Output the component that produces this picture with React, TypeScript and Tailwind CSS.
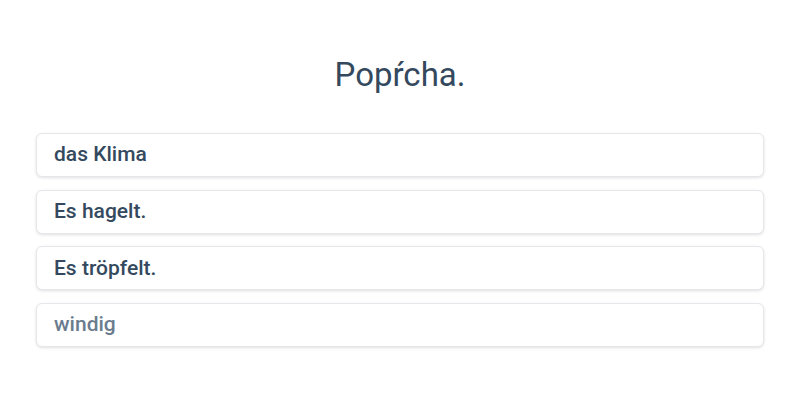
const options = [
  { label: "das Klima", muted: false },
  { label: "Es hagelt.", muted: false },
  { label: "Es tröpfelt.", muted: false },
  { label: "windig", muted: true },
];

export default function App() {
  return (
    <div className="w-[800px] h-[400px] bg-white font-['Roboto',sans-serif] text-[#34495e]">
      <div className="flex flex-col px-[36px] pt-[55px]">
        <h1 className="text-center text-[33px] leading-[40px] font-normal">Popŕcha.</h1>
        <div className="mt-[38px] flex flex-col gap-[12.67px]">
          {options.map((o) => (
            <button
              key={o.label}
              className="h-[44px] flex items-center px-[17px] rounded-[6px] border border-[#e5e7eb] bg-white shadow-[0_1px_3px_rgba(0,0,0,0.12)] text-left"
            >
              <span
                className={
                  o.muted
                    ? "text-[21px] font-medium text-[#6b7c8e]"
                    : "text-[21px] font-medium text-[#34495e]"
                }
              >
                {o.label}
              </span>
            </button>
          ))}
        </div>
      </div>
    </div>
  );
}
